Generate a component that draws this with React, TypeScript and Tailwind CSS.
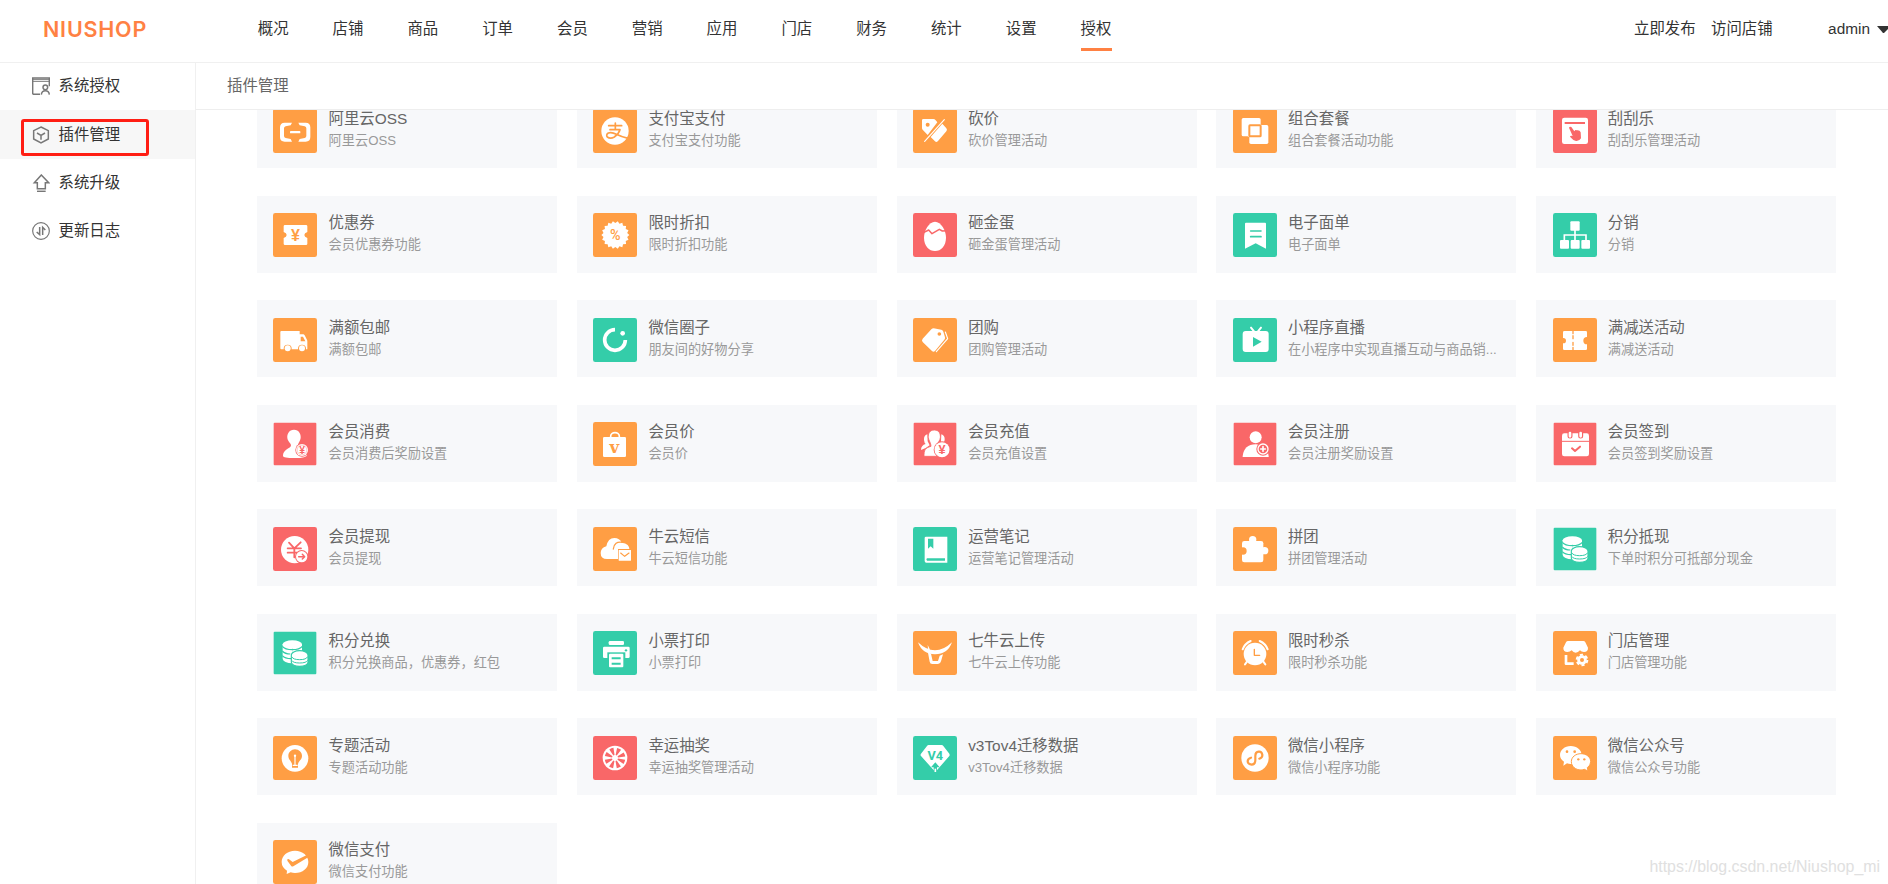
import React from "react";

const ORANGE = "#ff9e44";
const RED = "#f96768";
const GREEN = "#34cda9";

type GlyphProps = { c: string };

function Mark({ x, y, size, c, children, family = "Liberation Sans", weight = 700 }: {
  x: number; y: number; size: number; c: string; children: string; family?: string; weight?: number;
}) {
  return (
    <text x={x} y={y} fontSize={size} fontWeight={weight} fill={c} textAnchor="middle" fontFamily={`"${family}", sans-serif`}>
      {children}
    </text>
  );
}

const line = (c: string, w: number) => ({
  fill: "none", stroke: c, strokeWidth: w, strokeLinecap: "round" as const, strokeLinejoin: "round" as const,
});

const sealPoints = Array.from({ length: 36 }, (_, i) => {
  const r = i % 2 === 0 ? 42 : 36;
  const a = (i * Math.PI) / 18;
  return `${(67 + r * Math.cos(a)).toFixed(1)},${(66 + r * Math.sin(a)).toFixed(1)}`;
}).join(" ");

const glyphs: Record<string, (p: GlyphProps) => React.ReactElement> = {
  oss: () => (
    <>
      <path d="M57 41H35Q21 41 21 55V84Q21 98 35 98H57L53 90L38 87Q33 86 33 81V58Q33 53 38 52L53 49Z" />
      <path d="M76 41H98Q112 41 112 55V84Q112 98 98 98H76L80 90L95 87Q100 86 100 81V58Q100 53 95 52L80 49Z" />
      <rect x="51" y="66" width="31" height="7" rx="2" />
    </>
  ),
  alipay: ({ c }) => (
    <>
      <circle cx="66" cy="66" r="41" />
      <path d="M47 50H86M67 42V61M51 62H81Q77 75 64 84Q52 91 43 84Q38 77 46 72Q56 68 70 76Q86 84 108 89" {...line(c, 5)} />
    </>
  ),
  cut: ({ c }) => (
    <>
      <path d="M27 34Q27 30 31 30H61Q65 30 68 34L73 40L44 78L29 62Q27 60 27 56Z" />
      <circle cx="44" cy="47" r="6" fill={c} />
      <path d="M88 44L100 58Q104 63 100 67L75 96Q70 101 66 97L53 84Z" />
      <path d="M94 32L35 97" {...line("#fff", 3.5)} />
    </>
  ),
  combo: ({ c }) => (
    <>
      <rect x="26" y="27" width="57" height="55" rx="5" />
      <rect x="47" y="46" width="61" height="61" rx="6" fill={c} />
      <rect x="49" y="48" width="57" height="57" rx="5" />
      <rect x="44" y="45" width="41" height="39" rx="4" />
      <rect x="49" y="49" width="34" height="33" rx="2" fill="none" stroke={c} strokeWidth="6" />
    </>
  ),
  scratch: ({ c }) => (
    <>
      <rect x="27" y="26" width="78" height="79" rx="7" />
      <rect x="35" y="39" width="61" height="6" fill={c} />
      <path d="M48 56Q50 51 55 54L64 67Q67 61 71 64Q80 62 83 70L84 88Q79 97 69 96Q60 94 51 83Q52 78 59 81Z" fill={c} />
    </>
  ),
  coupon: ({ c }) => (
    <>
      <path d="M36 36H99Q103 36 103 40V57Q94 60 94 66Q94 72 103 75V92Q103 96 99 96H36Q32 96 32 92V75Q41 72 41 66Q41 60 32 57V40Q32 36 36 36Z" />
      <Mark x={67} y={83} size={48} c={c}>¥</Mark>
    </>
  ),
  discount: ({ c }) => (
    <>
      <polygon points={sealPoints} />
      <Mark x={67} y={81} size={43} c={c} family="Roboto" weight={500}>%</Mark>
    </>
  ),
  egg: ({ c }) => (
    <>
      <path d="M66 26C84 26 99 52 99 74C99 98 84 114 66 114C48 114 33 98 33 74C33 52 48 26 66 26Z" />
      <path d="M33 58L47 51L57 62L79 49L88 54L100 53" {...line(c, 4.5)} />
    </>
  ),
  sheet: ({ c }) => (
    <>
      <path d="M39 29H96Q99 29 99 32V107L68 91L36 107V32Q36 29 39 29Z" />
      <path d="M53 54H84M53 71H84" {...line(c, 5)} />
    </>
  ),
  tree: () => (
    <>
      <rect x="52" y="25" width="28" height="28" rx="3" />
      <path d="M66 50V84M34 84V66H99V84" fill="none" stroke="#fff" strokeWidth="5" />
      <rect x="21" y="81" width="27" height="26" rx="3" />
      <rect x="53" y="81" width="27" height="26" rx="3" />
      <rect x="85" y="81" width="26" height="26" rx="3" />
    </>
  ),
  truck: ({ c }) => (
    <>
      <path d="M25 39H80V49H91Q93 49 95 52L101 64Q103 67 103 70V94H25Q22 94 22 91V42Q22 39 25 39Z" />
      <path d="M83 56H90L97 70H83Z" fill={c} />
      <circle cx="44" cy="92" r="12" fill={c} />
      <circle cx="87" cy="92" r="12" fill={c} />
      <circle cx="44" cy="91" r="9" />
      <circle cx="87" cy="91" r="9" />
    </>
  ),
  ring: () => (
    <>
      <path d="M66 35A31 31 0 1 0 97 66" fill="none" stroke="#fff" strokeWidth="11" />
      <circle cx="89" cy="46" r="7" />
    </>
  ),
  tags: ({ c }) => (
    <>
      <path d="M29 62L55 34Q58 31 62 31L85 35Q90 36 91 41L96 58Q97 62 94 65L66 99Q61 104 57 99L29 72Q25 67 29 62Z" />
      <circle cx="79" cy="48" r="5.500" fill={c} />
      <path d="M97 42L104 62L70 101" {...line("#fff", 3.5)} />
    </>
  ),
  tv: ({ c }) => (
    <>
      <path d="M54 29L63 40M84 29L75 40" {...line("#fff", 6)} />
      <rect x="29" y="39" width="78" height="63" rx="9" />
      <path d="M60 57L86 71L60 86Z" fill={c} />
    </>
  ),
  ticket: ({ c }) => (
    <>
      <rect x="30" y="39" width="72" height="57" rx="4" />
      <circle cx="31" cy="68" r="8" fill={c} />
      <circle cx="102" cy="68" r="11" fill={c} />
      <path d="M60 37V47M60 53V62M60 73V82M60 88V98" {...line(c, 4)} />
    </>
  ),
  spend: ({ c }) => (
    <>
      <path d="M63 23C78 23 84 36 83 48C82 57 76 63 75 68C74 76 102 78 102 98Q102 108 65 108Q30 108 30 102C29 82 54 80 54 70C54 64 44 58 43 48C42 36 48 23 63 23Z" />
      <circle cx="87" cy="84" r="20" fill={c} />
      <circle cx="87" cy="84" r="18" />
      <circle cx="87" cy="84" r="14.500" fill="none" stroke={c} strokeWidth="1" />
      <Mark x={87} y={95} size={31} c={c}>¥</Mark>
    </>
  ),
  bag: ({ c }) => (
    <>
      <path d="M53 47V43A13 11 0 0 1 79 43V47" fill="none" stroke="#fff" strokeWidth="5" />
      <rect x="30" y="45" width="69" height="60" rx="4" />
      <Mark x={64} y={94} size={50} c={c} family="DejaVu Serif">v</Mark>
    </>
  ),
  group: ({ c }) => (
    <>
      <path d="M43 37Q32 40 33 54Q34 63 38 66Q24 70 24 84L38 78L50 70L44 58Z" />
      <path d="M85 37Q96 40 95 54Q94 62 89 65L100 72L80 74L84 58Z" />
      <path d="M64 24C79 24 83 36 82 47C81 56 75 60 74 67L86 74V103H33C33 84 36 78 54 73C54 62 47 56 46 47C45 36 49 24 64 24Z" stroke={c} strokeWidth="2.500" />
      <circle cx="87" cy="83" r="25" fill={c} />
      <circle cx="87" cy="83" r="22.500" />
      <Mark x={87} y={97} size={38} c={c}>¥</Mark>
    </>
  ),
  register: ({ c }) => (
    <>
      <circle cx="68" cy="46" r="18" />
      <path d="M29 102Q33 68 68 67Q103 68 107 102V105H29Z" />
      <circle cx="90" cy="81" r="20" fill={c} />
      <circle cx="90" cy="81" r="15" fill={c} stroke="#fff" strokeWidth="4" />
      <path d="M83 81H97M90 74V88" {...line("#fff", 5)} />
    </>
  ),
  calendar: ({ c }) => (
    <>
      <rect x="27" y="34" width="81" height="69" rx="7" />
      <path d="M51 34V42M83 34V42" {...line(c, 15)} />
      <path d="M51 33V43M83 33V43" {...line("#fff", 8)} />
      <path d="M27 58H108" stroke={c} strokeWidth="3" />
      <path d="M57 79L66 87L81 74" {...line(c, 6)} />
    </>
  ),
  withdraw: ({ c }) => (
    <>
      <circle cx="65" cy="68" r="41" />
      <path d="M48 47L64 64L83 46M44 64H84M44 77H72M64 64V91" {...line(c, 5.5)} />
      <circle cx="86" cy="89" r="20" fill={c} />
      <circle cx="86" cy="89" r="17" />
      <path d="M77 89H94M88 82L95 89L88 96" {...line(c, 4.5)} />
    </>
  ),
  cloud: ({ c }) => (
    <>
      <path d="M42 96Q23 96 23 78Q23 63 40 58Q45 33 64 33Q80 33 86 47Q110 49 110 70V96Z" />
      <path d="M61 66Q64 42 88 46" {...line(c, 4)} />
      <rect x="75" y="66" width="40" height="38" fill={c} />
      <rect x="77" y="69" width="37" height="32" rx="1" />
      <path d="M83 78L95 88L108 78" {...line(c, 3.5)} />
    </>
  ),
  book: ({ c }) => (
    <>
      <path d="M39 29H103V107H40Q35 107 35 102V33Q35 29 39 29Z" />
      <path d="M45 35H61V65L53 58L45 65Z" fill={c} />
      <path d="M42 94H96V101H42Q38 97 42 94Z" fill={c} />
    </>
  ),
  puzzle: ({ c }) => (
    <>
      <rect x="27" y="42" width="64" height="64" rx="7" />
      <circle cx="59" cy="38" r="11" />
      <circle cx="95" cy="71" r="11" />
      <circle cx="30" cy="72" r="11" fill={c} />
    </>
  ),
  coins: ({ c }) => (
    <>
      <path d="M29 40V84Q32 96 58 97L58 40Z" />
      <path d="M58 40H87V64H58Z" />
      <ellipse cx="58" cy="40" rx="29" ry="12" />
      <path d="M28 46Q36 56 58 56T88 46M28 60Q36 69 52 69M28 74Q36 83 54 83" fill="none" stroke={c} strokeWidth="3.500" />
      <path d="M55 72A25 13 0 0 1 105 72V94A25 12 0 0 1 55 94Z" stroke={c} strokeWidth="3.500" />
      <path d="M56 77Q60 86 80 86T104 77M56 88Q60 96 80 96T104 88" fill="none" stroke={c} strokeWidth="3" />
    </>
  ),
  printer: ({ c }) => (
    <>
      <rect x="47" y="30" width="46" height="12" rx="4" />
      <path d="M34 47H106Q110 47 110 51V77Q110 81 106 81H34Q30 81 30 77V51Q30 47 34 47Z" />
      <circle cx="99" cy="58" r="3.500" fill={c} />
      <rect x="43" y="64" width="54" height="20" fill={c} />
      <rect x="48" y="68" width="43" height="41" rx="3" />
      <path d="M56 82H83M56 98H83" fill="none" stroke={c} strokeWidth="6" />
    </>
  ),
  bull: () => (
    <>
      <path d="M15 34Q40 58 66 58Q92 58 117 34Q104 70 66 70Q28 70 15 34Z" />
      <path d="M44 42L49 52L51 66L46 62Z" />
      <path d="M44 60L54 68L59 90H75L80 74L90 70L84 91Q82 99 75 99H58Q51 99 50 92Z" />
    </>
  ),
  clock: ({ c }) => (
    <>
      <circle cx="66" cy="69" r="34" />
      <path d="M29 55Q35 38 53 30M104 55Q98 38 80 30M42 92L36 100M91 92L97 100" {...line("#fff", 6)} />
      <path d="M64 55V73H80" {...line(c, 4)} />
    </>
  ),
  store: ({ c }) => (
    <>
      <path d="M45 30H91Q95 30 97 34L105 50Q105 63 93 63Q85 63 81 58Q75 65 68 65Q61 65 56 58Q51 63 43 63Q31 63 31 50L39 34Q41 30 45 30Z" />
      <path d="M39 72V98H62" {...line("#fff", 8)} strokeLinecap="butt" />
      <circle cx="87" cy="87" r="16" fill="none" stroke="#fff" strokeWidth="6" strokeDasharray="9.300 7.455" />
      <circle cx="87" cy="87" r="14.500" />
      <circle cx="87" cy="87" r="6" fill={c} />
    </>
  ),
  bulb: ({ c }) => (
    <>
      <circle cx="66" cy="67" r="40" />
      <path d="M66 40C78 40 87 49 87 60C87 71 76 76 75 84V95H57V84C56 76 46 71 46 60C46 49 55 40 66 40Z" fill={c} />
      <circle cx="66" cy="59" r="3.500" />
      <path d="M66 60V86M59 88H74" fill="none" stroke="#fff" strokeWidth="3.500" />
    </>
  ),
  wheel: ({ c }) => (
    <>
      <circle cx="66" cy="66" r="37" />
      <circle cx="66" cy="66" r="20" fill="none" stroke={c} strokeWidth="22" strokeDasharray="8.600 7.108" transform="rotate(10 66 66)" />
    </>
  ),
  v4: ({ c }) => (
    <>
      <path d="M47 27H86Q89 27 91 30L109 53Q111 57 109 60L67 108L24 60Q21 57 24 53L42 30Q44 27 47 27Z" />
      <Mark x={67} y={71} size={38} c={c} family="Roboto">V4</Mark>
      <path d="M67 79L80 94H72V109H62V94H54Z" fill={c} />
      <path d="M67 98V108" stroke="#fff" strokeWidth="5" />
    </>
  ),
  mini: ({ c }) => (
    <>
      <circle cx="66" cy="66" r="41" />
      <path d="M79 68Q89 65 88 56Q86 46 77 47Q67 48 67 59V73Q67 85 56 86Q45 85 44 76Q44 68 54 65" {...line(c, 6.5)} />
    </>
  ),
  wechat: ({ c }) => (
    <>
      <path d="M53 30C72 30 86 42 86 57C86 73 72 84 53 84Q47 84 42 82L31 89L33 77Q21 69 21 57C21 42 35 30 53 30Z" />
      <circle cx="42" cy="47" r="4" fill={c} />
      <circle cx="65" cy="47" r="4" fill={c} />
      <path d="M84 53C100 53 113 63 113 77Q113 88 103 95L105 105L94 100Q90 102 84 102C68 102 55 91 55 77C55 63 68 53 84 53Z" stroke={c} strokeWidth="3" />
      <circle cx="76" cy="70" r="3.500" fill={c} />
      <circle cx="94" cy="70" r="3.500" fill={c} />
    </>
  ),
  wxpay: ({ c }) => (
    <>
      <path d="M66 32C89 32 106 47 106 66C106 85 89 99 66 99Q59 99 53 97L41 102L42 92Q26 82 26 66C26 47 43 32 66 32Z" />
      <path d="M43 58Q46 55 50 59L59 66L100 46L108 50L61 79Q55 81 53 76L43 62Z" fill={c} />
    </>
  ),
};

type Plugin = { icon: string; c: string; name: string; desc: string; faint?: boolean };

const plugins: Plugin[] = [
  { icon: "oss", c: ORANGE, name: "阿里云OSS", desc: "阿里云OSS" },
  { icon: "alipay", c: ORANGE, name: "支付宝支付", desc: "支付宝支付功能" },
  { icon: "cut", c: ORANGE, name: "砍价", desc: "砍价管理活动" },
  { icon: "combo", c: ORANGE, name: "组合套餐", desc: "组合套餐活动功能" },
  { icon: "scratch", c: RED, name: "刮刮乐", desc: "刮刮乐管理活动" },
  { icon: "coupon", c: ORANGE, name: "优惠券", desc: "会员优惠券功能" },
  { icon: "discount", c: ORANGE, name: "限时折扣", desc: "限时折扣功能" },
  { icon: "egg", c: RED, name: "砸金蛋", desc: "砸金蛋管理活动" },
  { icon: "sheet", c: GREEN, name: "电子面单", desc: "电子面单" },
  { icon: "tree", c: GREEN, name: "分销", desc: "分销" },
  { icon: "truck", c: ORANGE, name: "满额包邮", desc: "满额包邮" },
  { icon: "ring", c: GREEN, name: "微信圈子", desc: "朋友间的好物分享" },
  { icon: "tags", c: ORANGE, name: "团购", desc: "团购管理活动" },
  { icon: "tv", c: GREEN, name: "小程序直播", desc: "在小程序中实现直播互动与商品销..." },
  { icon: "ticket", c: ORANGE, name: "满减送活动", desc: "满减送活动" },
  { icon: "spend", c: RED, name: "会员消费", desc: "会员消费后奖励设置", faint: true },
  { icon: "bag", c: ORANGE, name: "会员价", desc: "会员价" },
  { icon: "group", c: RED, name: "会员充值", desc: "会员充值设置", faint: true },
  { icon: "register", c: RED, name: "会员注册", desc: "会员注册奖励设置", faint: true },
  { icon: "calendar", c: RED, name: "会员签到", desc: "会员签到奖励设置", faint: true },
  { icon: "withdraw", c: RED, name: "会员提现", desc: "会员提现" },
  { icon: "cloud", c: ORANGE, name: "牛云短信", desc: "牛云短信功能" },
  { icon: "book", c: GREEN, name: "运营笔记", desc: "运营笔记管理活动" },
  { icon: "puzzle", c: ORANGE, name: "拼团", desc: "拼团管理活动" },
  { icon: "coins", c: GREEN, name: "积分抵现", desc: "下单时积分可抵部分现金", faint: true },
  { icon: "coins", c: GREEN, name: "积分兑换", desc: "积分兑换商品，优惠券，红包", faint: true },
  { icon: "printer", c: GREEN, name: "小票打印", desc: "小票打印" },
  { icon: "bull", c: ORANGE, name: "七牛云上传", desc: "七牛云上传功能" },
  { icon: "clock", c: ORANGE, name: "限时秒杀", desc: "限时秒杀功能" },
  { icon: "store", c: ORANGE, name: "门店管理", desc: "门店管理功能" },
  { icon: "bulb", c: ORANGE, name: "专题活动", desc: "专题活动功能" },
  { icon: "wheel", c: RED, name: "幸运抽奖", desc: "幸运抽奖管理活动" },
  { icon: "v4", c: GREEN, name: "v3Tov4迁移数据", desc: "v3Tov4迁移数据" },
  { icon: "mini", c: ORANGE, name: "微信小程序", desc: "微信小程序功能" },
  { icon: "wechat", c: ORANGE, name: "微信公众号", desc: "微信公众号功能" },
  { icon: "wxpay", c: ORANGE, name: "微信支付", desc: "微信支付功能" },
];

function PluginCard({ p }: { p: Plugin }) {
  const Glyph = glyphs[p.icon];
  const inset = p.faint ? 2 : 0;
  return (
    <div className="flex h-[77px] bg-[#f7f8fa] pl-[16.4px] pt-[17.3px]">
      <svg viewBox="0 0 132 132" className="h-[44px] w-[44px] shrink-0" fill="#fff">
        <rect x={inset} y={inset} width={132 - inset * 2} height={132 - inset * 2} rx={p.faint ? 3 : 7} fill={p.c} />
        <Glyph c={p.c} />
      </svg>
      <div className="ml-[11.2px] min-w-0 whitespace-nowrap">
        <p className="mt-[-1px] h-[21.8px] text-[15.4px] leading-[22px] text-[#666]">{p.name}</p>
        <p className="h-[22px] text-[13.2px] leading-[22px] text-[#999]">{p.desc}</p>
      </div>
    </div>
  );
}

const menu = ["概况", "店铺", "商品", "订单", "会员", "营销", "应用", "门店", "财务", "统计", "设置", "授权"];

const sideIcons = [
  <g key="auth">
    <path d="M24 52H6Q2 52 2 48V3H52V28" />
    <path d="M2 7H52M2 13H52" strokeWidth="3" />
    <circle cx="40" cy="31" r="7" />
    <path d="M28 53Q29 41 40 41T52 53" />
  </g>,
  <g key="plugin">
    <path d="M27 3L49 14V39L27 51L5 39V14Z" />
    <path d="M15 21L27 28L39 21M27 28V41" />
  </g>,
  <g key="upgrade">
    <path d="M28 3L50 26H40V44H16V26H7Z" />
    <path d="M15 52H41" />
  </g>,
  <g key="log">
    <circle cx="27" cy="27" r="25" strokeWidth="3.500" />
    <path d="M23 15V38L14 30M32 39V16L40 24" />
  </g>,
];
const side = [
  { label: "系统授权", row: "h-[47px] pb-[2px]" },
  { label: "插件管理", row: "h-[49px] bg-[#f7f7f7]" },
  { label: "系统升级", row: "h-[48px] pb-[1px]" },
  { label: "更新日志", row: "h-[48px] pb-[1px]" },
];

export default function App() {
  return (
    <div className="relative flex h-[884px] w-[1888px] flex-col overflow-hidden bg-white font-['Liberation_Sans','Noto_Sans_CJK_SC',sans-serif] text-[15.4px] text-[#333]">
      <header className="flex h-[63px] shrink-0 items-start border-b border-[#f0f0f0]">
        <div className="w-[257.8px] shrink-0 pl-[43px] pt-[16px] font-['Inter',sans-serif] text-[21.5px] font-semibold leading-[26px] tracking-[0.800px] text-[#ff8143]">
          NIUSHOP
        </div>
        <nav className="flex gap-[44px]">
          {menu.map((m, i) => (
            <div key={m} className="flex w-[30.8px] flex-col whitespace-nowrap pt-[10px]">
              <span className="h-[38px] leading-[38px]">{m}</span>
              {i === menu.length - 1 && <span className="h-[3px] w-[31px] bg-[#ff8143]" />}
            </div>
          ))}
        </nav>
        <div className="ml-auto flex h-[58px] items-center whitespace-nowrap">
          <span>立即发布</span>
          <span className="ml-[15.4px]">访问店铺</span>
          <span className="ml-[55.500px]">admin</span>
          <svg viewBox="0 0 11 7" className="ml-[7px] h-[7px] w-[11px]">
            <path d="M0 0H11V3L7 7H6Z" fill="#333" />
          </svg>
        </div>
      </header>

      <div className="flex min-h-0 flex-1">
        <aside className="w-[196px] shrink-0 border-r border-[#f0f0f0]">
          {side.map((s, i) => (
            <div key={s.label} className={`flex items-center pl-[32px] ${s.row}`}>
              <svg viewBox="0 0 54 54" className="h-[18px] w-[18px]" fill="none" stroke="#777" strokeWidth="4.500">
                {sideIcons[i]}
              </svg>
              <span className="ml-[8.500px]">{s.label}</span>
            </div>
          ))}
        </aside>

        <main className="flex min-w-0 flex-1 flex-col">
          <div className="h-[47px] shrink-0 border-b border-[#eee] pl-[31px] leading-[46px] text-[#666]">插件管理</div>
          <div className="min-h-0 flex-1 overflow-hidden pl-[61px]">
            <div className="mt-[-18.600px] grid w-[1579.200px] grid-cols-5 gap-x-[19.800px] gap-y-[27.500px]">
              {plugins.map((p) => (
                <PluginCard key={p.name} p={p} />
              ))}
            </div>
          </div>
        </main>
      </div>

      <div className="absolute left-[21px] top-[119px] h-[37px] w-[128px] rounded-[3px] border-[3px] border-[#ff1e14]" />
      <div className="absolute bottom-[5px] right-[8px] text-[15.900px] leading-[24px] text-[#e0e0e0]">
        https://blog.csdn.net/Niushop_mi
      </div>
    </div>
  );
}
